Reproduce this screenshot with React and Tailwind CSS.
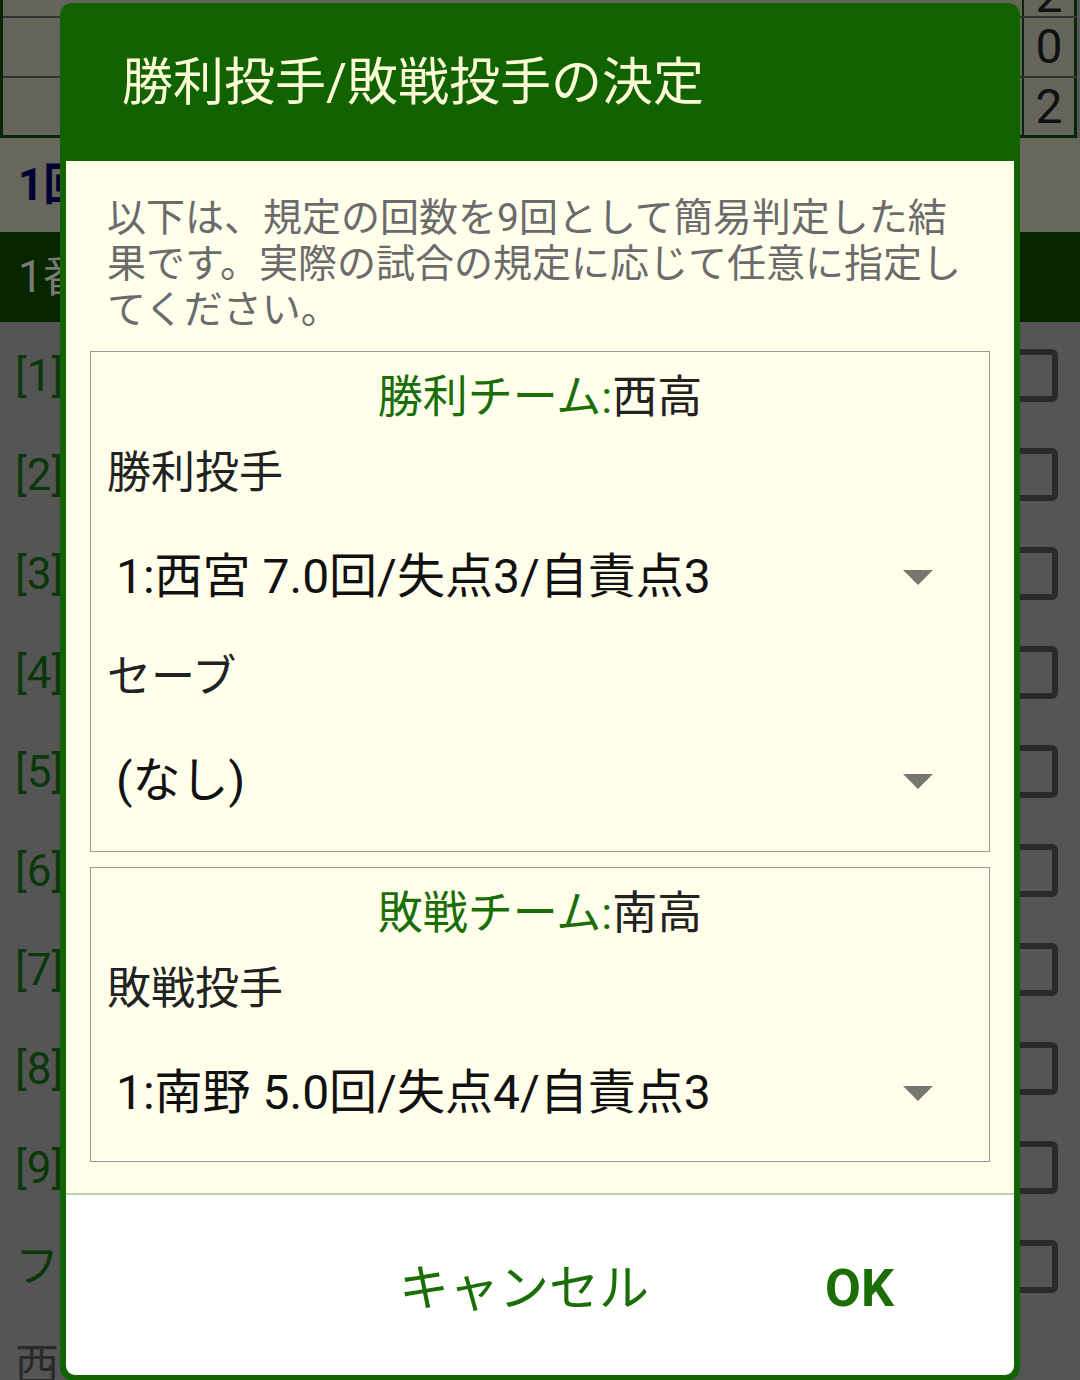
import React from 'react';

const ROWS = ['[1]', '[2]', '[3]', '[4]', '[5]', '[6]', '[7]', '[8]', '[9]', 'フ'];

function Caret() {
  return (
    <svg width="30" height="15" viewBox="0 0 30 15" className="shrink-0">
      <path d="M0 0H30L15 15Z" fill="#777770" />
    </svg>
  );
}

function Spinner({ value, height }) {
  return (
    <div className={`flex items-center pl-[25px] pr-[56px] ${height}`}>
      <span className="flex-1 text-[48px] leading-none text-[#111]">{value}</span>
      <Caret />
    </div>
  );
}

function TeamTitle({ label, team }) {
  return (
    <div className="flex h-[72px] items-center justify-center text-[45px] leading-none">
      <span className="text-[#1b6e06]">{label}</span>
      <span className="text-[#222]">{team}</span>
    </div>
  );
}

function FieldLabel({ children, height }) {
  return (
    <div className={`flex items-center pl-4 text-[44px] leading-none text-[#222] ${height}`}>
      {children}
    </div>
  );
}

// dimmed screen behind the dialog
function BackgroundScreen() {
  return (
    <div className="flex h-full flex-col bg-[#555555]">
      {/* score table */}
      <div className="mr-[3px] flex h-[138px] shrink-0 flex-col border-b-[3px] border-l-[3px] border-[#072507] bg-[#65655b]">
        <div className="flex h-[18px] shrink-0 overflow-hidden border-b-2 border-[#333]">
          <div className="w-[59px]" />
          <div className="flex-1" />
          <div className="flex w-[55px] items-end justify-center overflow-hidden border-l-2 border-r-[3px] border-[#072507]">
            <span className="text-[48px] leading-[40px] text-[#111]">2</span>
          </div>
        </div>
        <div className="flex h-[60px] shrink-0 border-b-2 border-[#333]">
          <div className="w-[59px]" />
          <div className="flex-1" />
          <div className="flex w-[55px] items-center justify-center border-l-2 border-r-[3px] border-[#072507] text-[48px] leading-none text-[#111]">
            0
          </div>
        </div>
        <div className="flex flex-1">
          <div className="w-[59px]" />
          <div className="flex-1" />
          <div className="flex w-[55px] items-center justify-center border-l-2 border-r-[3px] border-[#072507] text-[48px] leading-none text-[#111]">
            2
          </div>
        </div>
      </div>
      <div className="flex h-[94px] shrink-0 items-center bg-[#67675b] pl-[18px] text-[44px] font-bold leading-none text-[#000033]">
        1回
      </div>
      <div className="flex h-[90px] shrink-0 items-center bg-[#062600] pl-[18px] text-[44px] leading-none text-[#7a7a72]">
        1番
      </div>
      <div className="flex shrink-0 flex-col pt-[4px]">
        {ROWS.map((r) => (
          <div key={r} className="flex h-[99px] shrink-0 items-center justify-between pl-[15px] pr-[22px]">
            <span className="text-[44px] leading-none text-[#0a380a]">{r}</span>
            <span className="h-[53px] w-[53px] rounded-md border-[6px] border-[#2a2a2a]" />
          </div>
        ))}
        <div className="flex h-[99px] shrink-0 items-center pl-[15px]">
          <span className="text-[44px] leading-none text-[#2a2a2a]">西</span>
        </div>
      </div>
    </div>
  );
}

export default function App() {
  return (
    <div className="relative h-[1380px] w-[1080px] overflow-hidden font-[Roboto,'Noto_Sans_CJK_JP',sans-serif]">
      <BackgroundScreen />

      {/* dialog */}
      <div className="absolute left-[60px] top-[3px] flex h-[1377px] w-[960px] flex-col rounded-[12px] bg-[#116300]">
        <div className="flex h-[158px] shrink-0 items-center pl-[62px] text-[51px] leading-none text-[#fffbd9]">
          勝利投手/敗戦投手の決定
        </div>
        <div className="mx-[6px] mb-[5px] flex flex-1 flex-col overflow-hidden rounded-b-[9px]">
          <div className="flex h-[1032px] shrink-0 flex-col bg-[#ffffeb]">
            <div className="pl-[41px] pt-[34px] text-[39px] leading-[46px] text-[#6b6b6b]">
              <span className="block whitespace-nowrap">以下は、規定の回数を9回として簡易判定した結</span>
              <span className="block whitespace-nowrap">果です。実際の試合の規定に応じて任意に指定し</span>
              <span className="block whitespace-nowrap">てください。</span>
            </div>

            <div className="mx-[24px] mt-[18px] border border-[#999999] pb-[2px] pt-[9px]">
              <TeamTitle label="勝利チーム:" team="西高" />
              <FieldLabel height="h-[80px]">勝利投手</FieldLabel>
              <Spinner value="1:西宮 7.0回/失点3/自責点3" height="h-[128px]" />
              <FieldLabel height="h-[72px]">セーブ</FieldLabel>
              <Spinner value="(なし)" height="h-[136px]" />
            </div>

            <div className="mx-[24px] mt-[15px] border border-[#999999] pb-[4px] pt-[9px]">
              <TeamTitle label="敗戦チーム:" team="南高" />
              <FieldLabel height="h-[80px]">敗戦投手</FieldLabel>
              <Spinner value="1:南野 5.0回/失点4/自責点3" height="h-[128px]" />
            </div>
          </div>

          <div className="flex flex-1 items-center justify-end gap-[176px] border-t-2 border-[#b3d3ac] bg-[#fffffd] pr-[120px] pt-[8px]">
            <button className="text-[50px] leading-none text-[#1b6e06]">キャンセル</button>
            <button className="text-[52px] font-bold leading-none text-[#1b6e06]">OK</button>
          </div>
        </div>
      </div>
    </div>
  );
}
